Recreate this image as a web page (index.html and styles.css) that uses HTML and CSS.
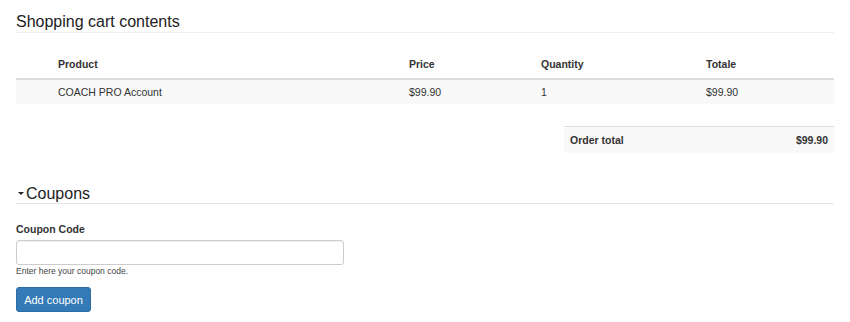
FILE: index.html
```html
<!DOCTYPE html>
<html>
<head>
<meta charset="utf-8">
<link rel="stylesheet" href="styles.css">
</head>
<body>
<div class="page">
  <h2 class="title">Shopping cart contents</h2>
  <table class="cart">
    <colgroup>
      <col class="c0"><col class="c1"><col class="c2"><col class="c3"><col class="c4">
    </colgroup>
    <thead>
      <tr><th></th><th>Product</th><th>Price</th><th>Quantity</th><th>Totale</th></tr>
    </thead>
    <tbody>
      <tr><td></td><td>COACH PRO Account</td><td>$99.90</td><td>1</td><td>$99.90</td></tr>
    </tbody>
  </table>
  <div class="totals">
    <div class="total-box">
      <span>Order total</span>
      <span>$99.90</span>
    </div>
  </div>
  <h2 class="coupons"><span class="caret"></span>Coupons</h2>
  <div class="form">
    <label class="label">Coupon Code</label>
    <input class="input" type="text">
    <div class="help">Enter here your coupon code.</div>
    <button class="btn">Add coupon</button>
  </div>
</div>
</body>
</html>
```
FILE: styles.css
```css
* { box-sizing: border-box; }
body {
  margin: 0;
  font-family: "Liberation Sans", Arial, sans-serif;
  color: #333;
  background: #fff;
}
.page {
  padding: 0 16px 0 16px;
  width: 850px;
}
.title {
  margin: 0;
  padding-top: 13px;
  height: 33px;
  font-size: 16px;
  font-weight: normal;
  line-height: 18px;
  color: #222;
  border-bottom: 1px solid #eee;
}
.cart {
  margin-top: 17px;
  width: 818px;
  border-collapse: collapse;
  font-size: 10.5px;
}
.c0 { width: 34px; }
.c1 { width: 351px; }
.c2 { width: 132px; }
.c3 { width: 165px; }
.cart th {
  text-align: left;
  font-weight: bold;
  height: 29px;
  padding: 0 8px;
  border-bottom: 2px solid #ddd;
  color: #333;
}
.cart td {
  height: 25px;
  padding: 0 8px;
  background: #f9f9f9;
  color: #333;
}
.totals {
  display: flex;
  justify-content: flex-end;
  margin-top: 22px;
}
.total-box {
  width: 270px;
  height: 27px;
  border-top: 1px solid #ddd;
  background: #f9f9f9;
  display: flex;
  justify-content: space-between;
  align-items: center;
  padding: 0 6px;
  font-size: 10.5px;
  font-weight: bold;
}
.coupons {
  margin: 27px 0 0 0;
  height: 24px;
  font-size: 16px;
  font-weight: normal;
  line-height: 18px;
  color: #222;
  border-bottom: 1px solid #e5e5e5;
  display: flex;
  align-items: center;
  padding-top: 5px;
  padding-bottom: 1px;
}
.caret {
  display: inline-block;
  width: 0;
  height: 0;
  margin: 0 2px 0 2px;
  border-left: 3px solid transparent;
  border-right: 3px solid transparent;
  border-top: 3px solid #222;
}
.form {
  display: flex;
  flex-direction: column;
  align-items: flex-start;
  padding-top: 18px;
}
.label {
  font-size: 10.5px;
  font-weight: bold;
  line-height: 14px;
  color: #333;
}
.input {
  margin-top: 4px;
  width: 328px;
  height: 25px;
  border: 1px solid #ccc;
  border-radius: 3px;
  box-shadow: inset 0 1px 1px rgba(0,0,0,0.06);
}
.help {
  margin-top: 0px;
  font-size: 8.5px;
  line-height: 12px;
  color: #444;
}
.btn {
  margin-top: 10px;
  width: 75px;
  height: 25px;
  border: 1px solid #2e6da4;
  border-radius: 3px;
  background: #337ab7;
  color: #fff;
  font-family: "Liberation Sans", Arial, sans-serif;
  font-size: 11px;
  padding: 0;
}
```
